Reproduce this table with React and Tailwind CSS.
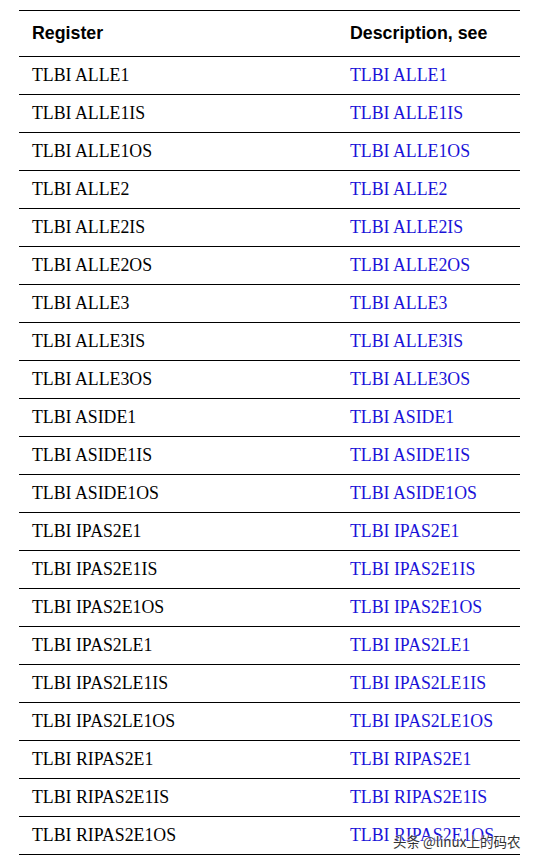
const rows = [
  'TLBI ALLE1',
  'TLBI ALLE1IS',
  'TLBI ALLE1OS',
  'TLBI ALLE2',
  'TLBI ALLE2IS',
  'TLBI ALLE2OS',
  'TLBI ALLE3',
  'TLBI ALLE3IS',
  'TLBI ALLE3OS',
  'TLBI ASIDE1',
  'TLBI ASIDE1IS',
  'TLBI ASIDE1OS',
  'TLBI IPAS2E1',
  'TLBI IPAS2E1IS',
  'TLBI IPAS2E1OS',
  'TLBI IPAS2LE1',
  'TLBI IPAS2LE1IS',
  'TLBI IPAS2LE1OS',
  'TLBI RIPAS2E1',
  'TLBI RIPAS2E1IS',
  'TLBI RIPAS2E1OS',
];

export default function App() {
  return (
    <div className="relative min-h-[864px] w-[534px] bg-white pt-[10px]">
      <div className="mx-[19px] w-[501px] border-t-[1.5px] border-black">
        <div className="flex h-[46px] items-center border-b-[1.5px] border-black font-['Liberation_Sans',Arial,sans-serif] text-[17.8px] font-bold text-black">
          <div className="w-[331px] pl-[13px]">Register</div>
          <div>Description, see</div>
        </div>
        {rows.map((r) => (
          <div
            key={r}
            className="flex h-[38px] items-center border-b-[1.5px] border-black font-['Liberation_Serif','Times_New_Roman',serif] text-[17.8px]"
          >
            <div className="w-[331px] pl-[13px] text-black">{r}</div>
            <div className="text-[#1a12d8]">{r}</div>
          </div>
        ))}
      </div>
      <div className="absolute left-[393px] top-[835px] font-['Noto_Sans_CJK_SC',sans-serif] text-[13.5px] leading-none text-[#333] [text-shadow:0_0_2px_#fff,0_0_2px_#fff]">
        头条 @linux上的码农
      </div>
    </div>
  );
}
